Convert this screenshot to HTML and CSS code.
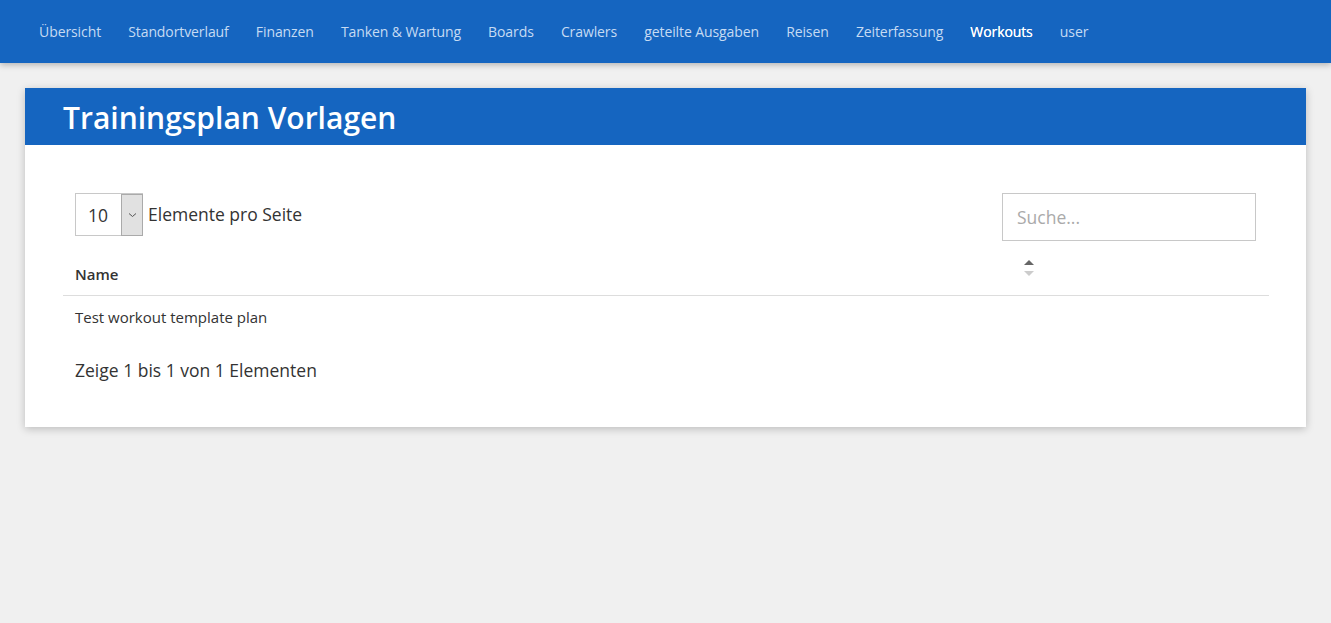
FILE: index.html
```html
<!DOCTYPE html>
<html lang="de">
<head>
<meta charset="utf-8">
<title>Trainingsplan Vorlagen</title>
<link rel="stylesheet" href="styles.css">
</head>
<body>
<nav class="navbar">
  <ul class="nav">
    <li><a href="#">Übersicht</a></li>
    <li><a href="#">Standortverlauf</a></li>
    <li><a href="#">Finanzen</a></li>
    <li><a href="#">Tanken &amp; Wartung</a></li>
    <li><a href="#">Boards</a></li>
    <li><a href="#">Crawlers</a></li>
    <li><a href="#">geteilte Ausgaben</a></li>
    <li><a href="#">Reisen</a></li>
    <li><a href="#">Zeiterfassung</a></li>
    <li><a href="#" class="active">Workouts</a></li>
    <li><a href="#">user</a></li>
  </ul>
</nav>
<main class="page">
  <section class="card">
    <header class="card-head"><h1>Trainingsplan Vorlagen</h1></header>
    <div class="card-body">
      <div class="controls">
        <label class="length">
          <span class="select"><span class="select-val">10</span><span class="select-btn"><svg width="9" height="6" viewBox="0 0 9 6"><path d="M1 1.5 L4.5 4.5 L8 1.5" fill="none" stroke="#555" stroke-width="1"/></svg></span></span>
          <span class="length-text">Elemente pro Seite</span>
        </label>
        <input class="search" type="text" placeholder="Suche...">
      </div>
      <table class="table">
        <thead>
          <tr><th class="sortable">Name<span class="sort"><span class="up"></span><span class="down"></span></span></th></tr>
        </thead>
        <tbody>
          <tr><td>Test workout template plan</td></tr>
        </tbody>
      </table>
      <div class="info">Zeige 1 bis 1 von 1 Elementen</div>
    </div>
  </section>
</main>
</body>
</html>
```
FILE: styles.css
```css
* { box-sizing: border-box; }
html, body { margin: 0; padding: 0; }
body {
  background: #f0f0f0;
  font-family: "Open Sans", "Noto Sans", sans-serif;
  color: #333;
  height: 623px;
  overflow: hidden;
}
.navbar {
  background: #1565c0;
  height: 63px;
  box-shadow: 0 2px 6px rgba(0,0,0,0.25);
  position: relative;
  z-index: 2;
}
.nav {
  list-style: none;
  margin: 0;
  padding: 0 0 0 25.5px;
  display: flex;
  height: 63px;
  align-items: center;
}
.nav a {
  display: block;
  padding: 0 13.6px;
  font-size: 14px;
  line-height: 20px;
  color: #c6dbf3;
  text-decoration: none;
  letter-spacing: -0.1px;
}
.nav a.active { color: #fff; text-shadow: 0 0 0.4px #fff; }
.page { padding: 25px 25px 0 25px; }
.card {
  background: #fff;
  box-shadow: 0 2px 8px rgba(0,0,0,0.22);
}
.card-head {
  background: #1565c0;
  height: 57px;
  padding: 0 38px;
  display: flex;
  align-items: center;
}
.card-head h1 {
  margin: 0;
  color: #fff;
  font-size: 30px;
  font-weight: 600;
  line-height: 1;
  padding-top: 3px;
  letter-spacing: 0;
}
.card-body { padding: 48px 37px 45px 38px; }
.controls {
  display: flex;
  justify-content: space-between;
  align-items: flex-start;
  padding: 0 13px 0 12px;
  height: 66px;
}
.length { display: flex; align-items: center; height: 43px; }
.select {
  display: flex;
  width: 68px;
  height: 43px;
  border: 1px solid #c8c8c8;
  background: #fff;
}
.select-val {
  flex: 1;
  font-size: 17.5px;
  display: flex;
  align-items: center;
  padding-left: 12px;
  color: #333;
}
.select-btn {
  width: 22px;
  background: #e1e1e1;
  border: 1px solid #aaa;
  margin: 0 -1px -1px 0;
  display: flex;
  align-items: center;
  justify-content: center;
}
.length-text { font-size: 17.5px; margin-left: 5px; color: #333; margin-top: -1px; }
.search {
  width: 254px;
  height: 48px;
  border: 1px solid #c8c8c8;
  padding: 0 14px;
  font-family: inherit;
  font-size: 17.5px;
  color: #333;
  outline: none;
}
.search::placeholder { color: #aaa; }
.table { width: 100%; border-collapse: collapse; }
.table th {
  text-align: left;
  font-size: 15px;
  font-weight: 600;
  padding: 5px 12px 11px;
  border-bottom: 1px solid #ddd;
  position: relative;
  color: #333;
}
.sort {
  position: absolute;
  left: 961px;
  top: 1px;
  display: flex;
  flex-direction: column;
  gap: 6px;
}
.sort .up { width: 0; height: 0; border-left: 5px solid transparent; border-right: 5px solid transparent; border-bottom: 5px solid #666; }
.sort .down { width: 0; height: 0; border-left: 5px solid transparent; border-right: 5px solid transparent; border-top: 5px solid #ccc; }
.table td { font-size: 15px; padding: 11px 12px 10px; color: #333; }
.info { font-size: 17.5px; padding: 21px 12px 0; color: #333; }
```
